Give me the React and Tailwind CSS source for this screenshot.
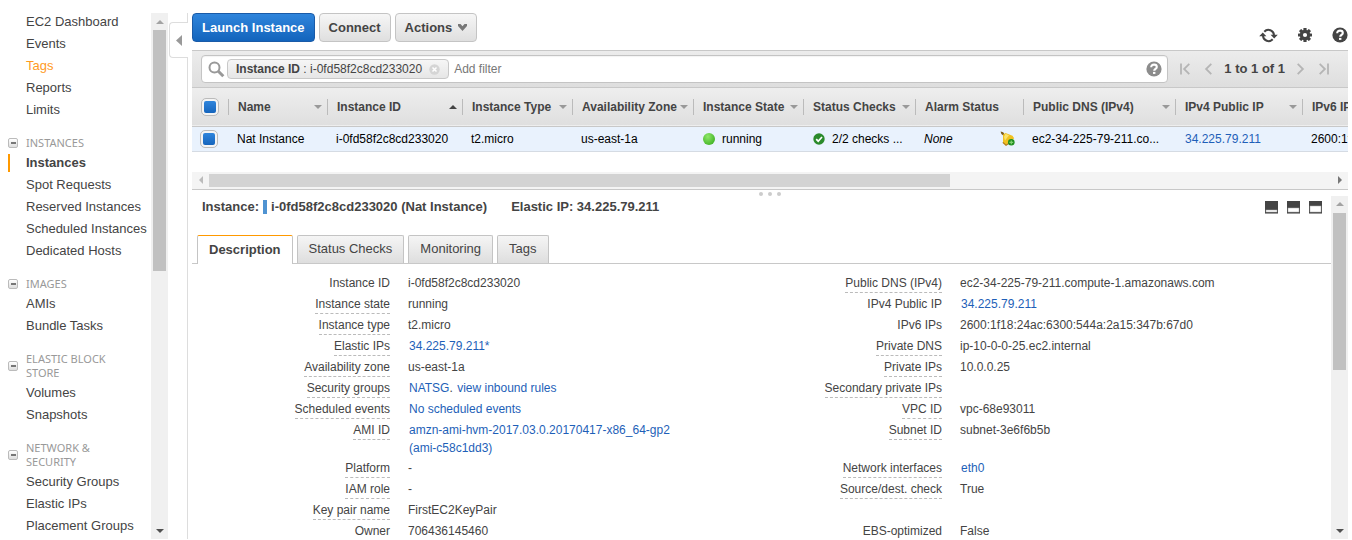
import { useState } from 'react';
import clsx from 'clsx';

const NAV = [
  { items: ['EC2 Dashboard', 'Events', 'Tags', 'Reports', 'Limits'] },
  {
    title: 'INSTANCES',
    items: ['Instances', 'Spot Requests', 'Reserved Instances', 'Scheduled Instances', 'Dedicated Hosts'],
  },
  { title: 'IMAGES', items: ['AMIs', 'Bundle Tasks'] },
  { title: 'ELASTIC BLOCK STORE', items: ['Volumes', 'Snapshots'] },
  { title: 'NETWORK & SECURITY', items: ['Security Groups', 'Elastic IPs', 'Placement Groups'] },
];

const COLUMNS = [
  { label: 'Name', width: 'w-[99px]', sort: 'down' },
  { label: 'Instance ID', width: 'w-[135px]', sort: 'up' },
  { label: 'Instance Type', width: 'w-[110px]', sort: 'down' },
  { label: 'Availability Zone', width: 'w-[121px]', sort: 'down' },
  { label: 'Instance State', width: 'w-[110px]', sort: 'down' },
  { label: 'Status Checks', width: 'w-[112px]', sort: 'down' },
  { label: 'Alarm Status', width: 'w-[108px]' },
  { label: 'Public DNS (IPv4)', width: 'w-[152px]', sort: 'down' },
  { label: 'IPv4 Public IP', width: 'w-[127px]', sort: 'down' },
  { label: 'IPv6 IPs', width: 'w-[300px]', sort: 'down' },
];

const TABS = ['Description', 'Status Checks', 'Monitoring', 'Tags'];

// label, value, tip (dashed underline), link
const DETAILS = [
  [{ label: 'Instance ID', value: 'i-0fd58f2c8cd233020' }, { label: 'Public DNS (IPv4)', value: 'ec2-34-225-79-211.compute-1.amazonaws.com', tip: true }],
  [{ label: 'Instance state', value: 'running', tip: true }, { label: 'IPv4 Public IP', value: '34.225.79.211', link: true }],
  [{ label: 'Instance type', value: 't2.micro', tip: true }, { label: 'IPv6 IPs', value: '2600:1f18:24ac:6300:544a:2a15:347b:67d0' }],
  [{ label: 'Elastic IPs', value: '34.225.79.211*', tip: true, link: true }, { label: 'Private DNS', value: 'ip-10-0-0-25.ec2.internal', tip: true }],
  [{ label: 'Availability zone', value: 'us-east-1a', tip: true }, { label: 'Private IPs', value: '10.0.0.25', tip: true }],
  [
    {
      label: 'Security groups',
      tip: true,
      value: (
        <>
          <a href="#natsg" className="pl-px text-[#1e5fb8]">NATSG</a>. <a href="#rules" className="pl-px text-[#1e5fb8]">view inbound rules</a>
        </>
      ),
    },
    { label: 'Secondary private IPs', value: '', tip: true },
  ],
  [{ label: 'Scheduled events', value: 'No scheduled events', tip: true, link: true }, { label: 'VPC ID', value: 'vpc-68e93011', tip: true }],
  [
    { label: 'AMI ID', value: 'amzn-ami-hvm-2017.03.0.20170417-x86_64-gp2 (ami-c58c1dd3)', tip: true, link: true },
    { label: 'Subnet ID', value: 'subnet-3e6f6b5b', tip: true },
  ],
  [{ label: 'Platform', value: '-', tip: true }, { label: 'Network interfaces', value: 'eth0', tip: true, link: true }],
  [{ label: 'IAM role', value: '-', tip: true }, { label: 'Source/dest. check', value: 'True', tip: true }],
  [{ label: 'Key pair name', value: 'FirstEC2KeyPair', tip: true }, null],
  [{ label: 'Owner', value: '706436145460' }, { label: 'EBS-optimized', value: 'False' }],
];

const Triangle = ({ dir, className }) => {
  const points = {
    up: '0,4 4,0 8,4',
    down: '0,0 8,0 4,4',
    left: '4,0 4,8 0,4',
    right: '0,0 4,4 0,8',
  };
  const flat = dir === 'up' || dir === 'down';
  return (
    <svg width={flat ? 8 : 4} height={flat ? 4 : 8} viewBox={flat ? '0 0 8 4' : '0 0 4 8'} className={className} aria-hidden="true">
      <polygon points={points[dir]} fill="currentColor" />
    </svg>
  );
};

const VerticalScrollbar = ({ thumb }) => (
  <div className="flex w-[17px] shrink-0 flex-col items-center bg-[#f0f0f0]">
    <div className="flex h-[17px] shrink-0 items-center text-[#a3a3a3]">
      <Triangle dir="up" />
    </div>
    <div className="flex w-[13px] flex-1 flex-col">
      <div className={clsx('bg-[#c1c1c1]', thumb)} />
    </div>
    <div className="flex h-[17px] shrink-0 items-center text-[#505050]">
      <Triangle dir="down" />
    </div>
  </div>
);

const HelpIcon = ({ className }) => (
  <svg width="16" height="16" viewBox="0 0 16 16" className={className} aria-hidden="true">
    <circle cx="8" cy="8" r="7.6" fill="currentColor" />
    <path d="M5.2 6.3c0-1.700 1.100-2.700 2.900-2.700 1.700 0 2.700.9 2.700 2.300 0 1.900-2.600 1.900-2.600 3.900" fill="none" stroke="#fff" strokeWidth="2.100" />
    <rect x="7" y="10.900" width="2.400" height="2" fill="#fff" />
  </svg>
);

const RefreshIcon = () => (
  <svg width="19" height="15" viewBox="0 0 19 15" fill="none" aria-hidden="true">
    <path d="M5.300 3.700A5.600 5.600 0 0 1 15 7.200M13.700 11.300A5.600 5.600 0 0 1 4 7.800" stroke="#444" strokeWidth="2" />
    <path d="M11.600 6.800h7.200L15.200 10.600zM.2 8.200h7.200L3.800 4.400z" fill="#444" />
  </svg>
);

const GearIcon = () => (
  <svg width="14" height="14" viewBox="0 0 14 14" aria-hidden="true">
    <g fill="#444">
      {[0, 45, 90, 135].map((angle) => (
        <rect key={angle} x="5.400" y="0" width="3.200" height="14" rx=".5" transform={`rotate(${angle} 7 7)`} />
      ))}
      <circle cx="7" cy="7" r="5.200" />
    </g>
    <circle cx="7" cy="7" r="2.100" fill="#fff" />
  </svg>
);

const BellIcon = () => (
  <svg width="15" height="15" viewBox="0 0 15 15" aria-hidden="true">
    <path d="M.6.5 3.200 1.200 4.500 3.200 3.200 4.400 1.400 3z" fill="#7b5a1c" />
    <path d="M3 3.800 5.500 2 12.500 4.800 14.200 7.200 6 14 3 11.800z" fill="#f0c020" />
    <path d="M5.500 2.700 9 4.300 5 9.500 4 6z" fill="#fbe36a" />
    <path d="M2.800 11.400 6 14.200 9 12.200" stroke="#b07a14" strokeWidth="1.200" fill="none" />
    <circle cx="11.300" cy="11.300" r="3.300" fill="#1f8f1f" />
    <path d="M11.300 9.400v3.800M9.400 11.300h3.800" stroke="#7fd070" strokeWidth="1.200" />
  </svg>
);

// pane size toggles, `top` is where the lower half of the window starts
const PaneIcon = ({ top }) => (
  <svg width="13" height="13" viewBox="0 0 13 13" aria-hidden="true">
    <rect width="13" height="12" fill="#444" />
    <rect y="12" width="13" height="1" fill="#999" />
    <rect x="1" y={top} width="11" height={11 - top} fill="#fff" stroke="#aaa" strokeWidth=".5" />
  </svg>
);

const PagerIcon = ({ flip, bar }) => (
  <svg width="11" height="12" viewBox="0 0 11 12" className={flip ? '-scale-x-100' : ''} fill="none" stroke="#b5b5b5" strokeWidth="1.800" aria-hidden="true">
    <path d="M9.300.8 4.100 6l5.200 5.200" />
    {bar && <path d="M1 .4v11.200" />}
  </svg>
);

const BlueCheckbox = ({ label, defaultChecked }) => (
  <input
    type="checkbox"
    aria-label={label}
    defaultChecked={defaultChecked}
    className="block size-4 appearance-none rounded border-2 border-[#f4f4f4] bg-white outline-1 outline-[#bbb] checked:bg-linear-to-b checked:from-[#2f85dc] checked:to-[#1565bd]"
  />
);

const Sidebar = () => (
  <nav className="flex w-[168px] shrink-0">
    <div className="flex min-w-0 flex-1 flex-col gap-[15px] overflow-hidden pt-[11px]">
      {NAV.map((section, i) => (
        <div key={i} className="shrink-0">
          {section.title && (
            <div className="mb-[2px] flex items-center gap-2 pl-2">
              <button
                type="button"
                aria-label={`Collapse ${section.title}`}
                className="flex size-[10px] shrink-0 items-center justify-center rounded-xs border border-[#bbb] bg-linear-to-b from-white to-[#ddd]"
              >
                <span className="h-[2px] w-[5px] bg-[#777]" />
              </button>
              <h2 className="w-[110px] font-['Noto_Sans','Open_Sans',sans-serif] text-[11px] leading-[14px] text-[#999]">{section.title}</h2>
            </div>
          )}
          <ul>
            {section.items.map((item) => (
              <li key={item} className="flex h-[22px] items-center pl-2">
                <a
                  href="#nav"
                  className={clsx(
                    'border-l-2 pl-4 leading-[18px] whitespace-nowrap',
                    item === 'Instances' ? 'border-[#f90] font-bold' : 'border-transparent',
                    item === 'Tags' && 'text-[#ff9a1f]'
                  )}
                >
                  {item}
                </a>
              </li>
            ))}
          </ul>
        </div>
      ))}
    </div>
    <div className="flex pt-[13px]">
      <VerticalScrollbar thumb="h-[49%]" />
    </div>
  </nav>
);

const CollapseHandle = () => (
  <div className="flex w-5 shrink-0 flex-col pt-[13px]">
    <div className="h-[9px] border-r border-[#ddd]" />
    <button
      type="button"
      aria-label="Collapse navigation"
      className="ml-px flex h-9 items-center justify-center rounded-l border border-r-0 border-[#ddd] text-[#999]"
    >
      <svg width="6" height="11" viewBox="0 0 6 11" aria-hidden="true">
        <polygon points="6,0 6,11 0,5.500" fill="currentColor" />
      </svg>
    </button>
    <div className="flex-1 border-r border-[#ddd]" />
  </div>
);

const Toolbar = () => (
  <div className="flex items-start gap-1 pb-2">
    <button type="button" className="h-[29px] rounded border border-[#1a5ba8] bg-linear-to-b from-[#2f85dc] to-[#1264bc] px-[9px] font-bold text-white">
      Launch Instance
    </button>
    <button type="button" className="h-[29px] rounded border border-[#c4c4c4] bg-linear-to-b from-[#f6f6f6] to-[#dfdfdf] px-[9px] font-bold">
      Connect
    </button>
    <button type="button" className="flex h-[29px] items-center gap-[6px] rounded border border-[#c4c4c4] bg-linear-to-b from-[#f6f6f6] to-[#dfdfdf] px-[9px] font-bold">
      Actions
      <svg width="9" height="7" viewBox="0 0 9 7" aria-hidden="true">
        <path d="M0 0h2.500l2 2.300L6.500 0H9v2L4.500 7 0 2z" fill="#777" />
      </svg>
    </button>
    <div className="mt-[14px] -mb-px ml-auto flex items-center gap-5">
      <button type="button" aria-label="Refresh"><RefreshIcon /></button>
      <button type="button" aria-label="Settings"><GearIcon /></button>
      <button type="button" aria-label="Help" className="text-[#444]"><HelpIcon /></button>
    </div>
  </div>
);

const FilterBar = () => (
  <div className="flex h-[38px] items-center border-y border-[#c8c8c8] bg-linear-to-b from-[#ececec] to-[#dedede] pr-[19px] pl-[9px]">
    <div className="flex h-7 min-w-0 flex-1 items-center rounded border border-[#c4c4c4] bg-white pr-[5px] pl-[6px] inset-shadow-xs">
      <svg width="17" height="17" viewBox="0 0 17 17" fill="none" stroke="#999" aria-hidden="true">
        <circle cx="6.500" cy="6.500" r="5" strokeWidth="2" />
        <path d="m10.300 10.300 5 5" strokeWidth="3" />
      </svg>
      <span className="ml-[2px] flex h-5 shrink-0 items-center rounded border border-[#c8c8c8] bg-linear-to-b from-[#f6f6f6] to-[#e6e6e6] px-2 text-[12px] whitespace-nowrap">
        <b>Instance ID</b>&nbsp;: i-0fd58f2c8cd233020
        <button type="button" aria-label="Remove filter" className="ml-[7px]">
          <svg width="11" height="11" viewBox="0 0 11 11" aria-hidden="true">
            <circle cx="5.500" cy="5.500" r="5.200" fill="#d5d5d5" />
            <path d="m3.500 3.500 4 4m0-4-4 4" stroke="#fff" strokeWidth="1.500" />
          </svg>
        </button>
      </span>
      <input
        type="text"
        aria-label="Add filter"
        placeholder="Add filter"
        className="ml-[5px] min-w-0 flex-1 text-[12px] outline-none placeholder:text-[#777]"
      />
      <button type="button" aria-label="Filter help" className="text-[#8c8c8c]"><HelpIcon /></button>
    </div>
    <div className="ml-3 flex shrink-0 items-center gap-[11px]">
      <button type="button" aria-label="First page"><PagerIcon bar /></button>
      <button type="button" aria-label="Previous page"><PagerIcon /></button>
      <span className="font-bold">1 to 1 of 1</span>
      <button type="button" aria-label="Next page"><PagerIcon flip /></button>
      <button type="button" aria-label="Last page"><PagerIcon flip bar /></button>
    </div>
  </div>
);

const InstancesTable = () => (
  <div className="overflow-hidden">
    <table className="w-full min-w-[1410px] table-fixed border-collapse text-left text-[12px]">
      <thead>
        <tr className="h-[38px] border-b border-[#c8c8c8] bg-linear-to-b from-[#eee] to-[#dfdfdf]">
          <th scope="col" className="w-9 p-0 pl-[10px]">
            <BlueCheckbox label="Select all instances" defaultChecked />
          </th>
          {COLUMNS.map((col) => (
            <th key={col.label} scope="col" className={clsx('p-0', col.width)}>
              <div className="flex h-4 items-center justify-between border-l border-[#bbb] pr-[5px] pl-[9px] whitespace-nowrap">
                {col.label}
                {col.sort === 'down' && <Triangle dir="down" className="text-[#999]" />}
                {col.sort === 'up' && <Triangle dir="up" className="text-[#444]" />}
              </div>
            </th>
          ))}
        </tr>
      </thead>
      <tbody>
        <tr className="h-[25px] border-b border-[#d5dbe3] bg-[#e9f2fd] text-black [&>td]:py-0 [&>td]:pr-2 [&>td]:pl-[9px] [&>td]:whitespace-nowrap">
          <td>
            <BlueCheckbox label="Select Nat Instance" defaultChecked />
          </td>
          <td>Nat Instance</td>
          <td>i-0fd58f2c8cd233020</td>
          <td>t2.micro</td>
          <td>us-east-1a</td>
          <td>
            <span className="flex items-center gap-[7px] pl-px">
              <span className="size-3 rounded-full bg-radial-[at_40%_30%] from-[#8fe86a] to-[#2da512]" />
              running
            </span>
          </td>
          <td>
            <span className="flex items-center gap-[7px] pl-px">
              <svg width="12" height="12" viewBox="0 0 12 12" className="shrink-0" aria-hidden="true">
                <circle cx="6" cy="6" r="5.700" fill="#2a8a2a" />
                <path d="m3.200 6.200 2 2L9 4" fill="none" stroke="#fff" strokeWidth="1.700" />
              </svg>
              2/2 checks ...
            </span>
          </td>
          <td>
            <span className="flex items-center justify-between">
              <em>None</em>
              <BellIcon />
            </span>
          </td>
          <td>ec2-34-225-79-211.co...</td>
          <td className="text-[#1e5fb8]">
            <a href="#ip" className="ml-px">34.225.79.211</a>
          </td>
          <td>2600:1f18:24ac:6300:544a:2a15:347b:67d0</td>
        </tr>
      </tbody>
    </table>
    <div className="mt-5 flex h-[17px] items-center bg-[#f4f4f4]">
      <div className="flex w-[17px] justify-center text-[#bbb]"><Triangle dir="left" /></div>
      <div className="flex h-[13px] flex-1">
        <div className="w-[66%] bg-[#d3d3d3]" />
      </div>
      <div className="flex w-[17px] justify-center text-[#777]"><Triangle dir="right" /></div>
    </div>
  </div>
);

const DetailCells = ({ item }) => {
  if (!item) return <td colSpan={2} />;
  return (
    <>
      <th scope="row" className="pt-px pr-[18px] pb-px text-right align-top font-normal">
        <span className={clsx('inline-block border-b border-dashed', item.tip ? 'border-[#bbb]' : 'border-transparent')}>{item.label}</span>
      </th>
      <td className="pt-px pb-px align-top">
        {item.link ? <a href="#detail" className="block max-w-[290px] pl-px text-[#1e5fb8]">{item.value}</a> : item.value}
      </td>
    </>
  );
};

const DetailsPane = () => {
  const [tab, setTab] = useState('Description');

  return (
    <section className="flex min-h-0 flex-1 flex-col border-t border-[#c8c8c8]">
      {/* Drag grip */}
      <div className="flex h-[6px] shrink-0 items-end justify-center gap-[5px]">
        <span className="size-1 rounded-xs bg-[#ccc]" />
        <span className="size-1 rounded-xs bg-[#ccc]" />
        <span className="size-1 rounded-xs bg-[#ccc]" />
      </div>

      <div className="flex min-h-0 flex-1">
        <div className="flex min-w-0 flex-1 flex-col overflow-hidden">
          {/* Header */}
          <div className="flex h-[39px] shrink-0 items-start justify-between pt-[2px] pr-[9px] pl-[10px]">
            <div className="flex gap-6 leading-[18px] font-bold">
              <h1 className="flex items-center gap-1">
                Instance:
                <span className="h-[14px] w-1 bg-[#4f93d2]" />
                i-0fd58f2c8cd233020 (Nat Instance)
              </h1>
              <span>Elastic IP: 34.225.79.211</span>
            </div>
            <div className="mt-[3px] flex gap-[9px]">
              <button type="button" aria-label="Small pane"><PaneIcon top={9} /></button>
              <button type="button" aria-label="Half pane"><PaneIcon top={7} /></button>
              <button type="button" aria-label="Full pane"><PaneIcon top={5} /></button>
            </div>
          </div>

          {/* Tabs */}
          <div role="tablist" className="flex h-[29px] shrink-0 items-end gap-1 border-b border-[#c8c8c8] pl-[5px]">
            {TABS.map((name) => (
              <button
                key={name}
                type="button"
                role="tab"
                aria-selected={tab === name}
                onClick={() => setTab(name)}
                className={clsx(
                  'shrink-0 rounded-t-xs border-x border-t border-x-[#c4c4c4] px-[11px]',
                  tab === name
                    ? 'z-10 -mb-px h-[29px] border-t-[#f90] bg-white font-bold'
                    : 'h-7 border-t-[#c4c4c4] bg-linear-to-b from-[#f5f5f5] to-[#dedede]'
                )}
              >
                {name}
              </button>
            ))}
          </div>

          {/* Instance attributes */}
          <div className="pt-[9px] pr-[35px]">
            <table className="w-full table-fixed border-collapse text-left text-[12px] leading-[18px]">
              <colgroup>
                <col className="w-[216px]" />
                <col />
                <col className="w-[216px]" />
                <col />
              </colgroup>
              <tbody>
                {DETAILS.map(([left, right]) => (
                  <tr key={left.label} className="h-[21px]">
                    <DetailCells item={left} />
                    <DetailCells item={right} />
                  </tr>
                ))}
              </tbody>
            </table>
          </div>
        </div>
        <VerticalScrollbar thumb="h-[51%]" />
      </div>
    </section>
  );
};

const App = () => (
  <div className="flex h-screen overflow-hidden bg-white pr-1 pb-px font-['Liberation_Sans',Arial,sans-serif] text-[13px] text-[#444]">
    <Sidebar />
    <CollapseHandle />
    <main className="ml-1 flex min-w-0 flex-1 flex-col pt-[13px]">
      <Toolbar />
      <FilterBar />
      <InstancesTable />
      <DetailsPane />
    </main>
  </div>
);

export default App;
